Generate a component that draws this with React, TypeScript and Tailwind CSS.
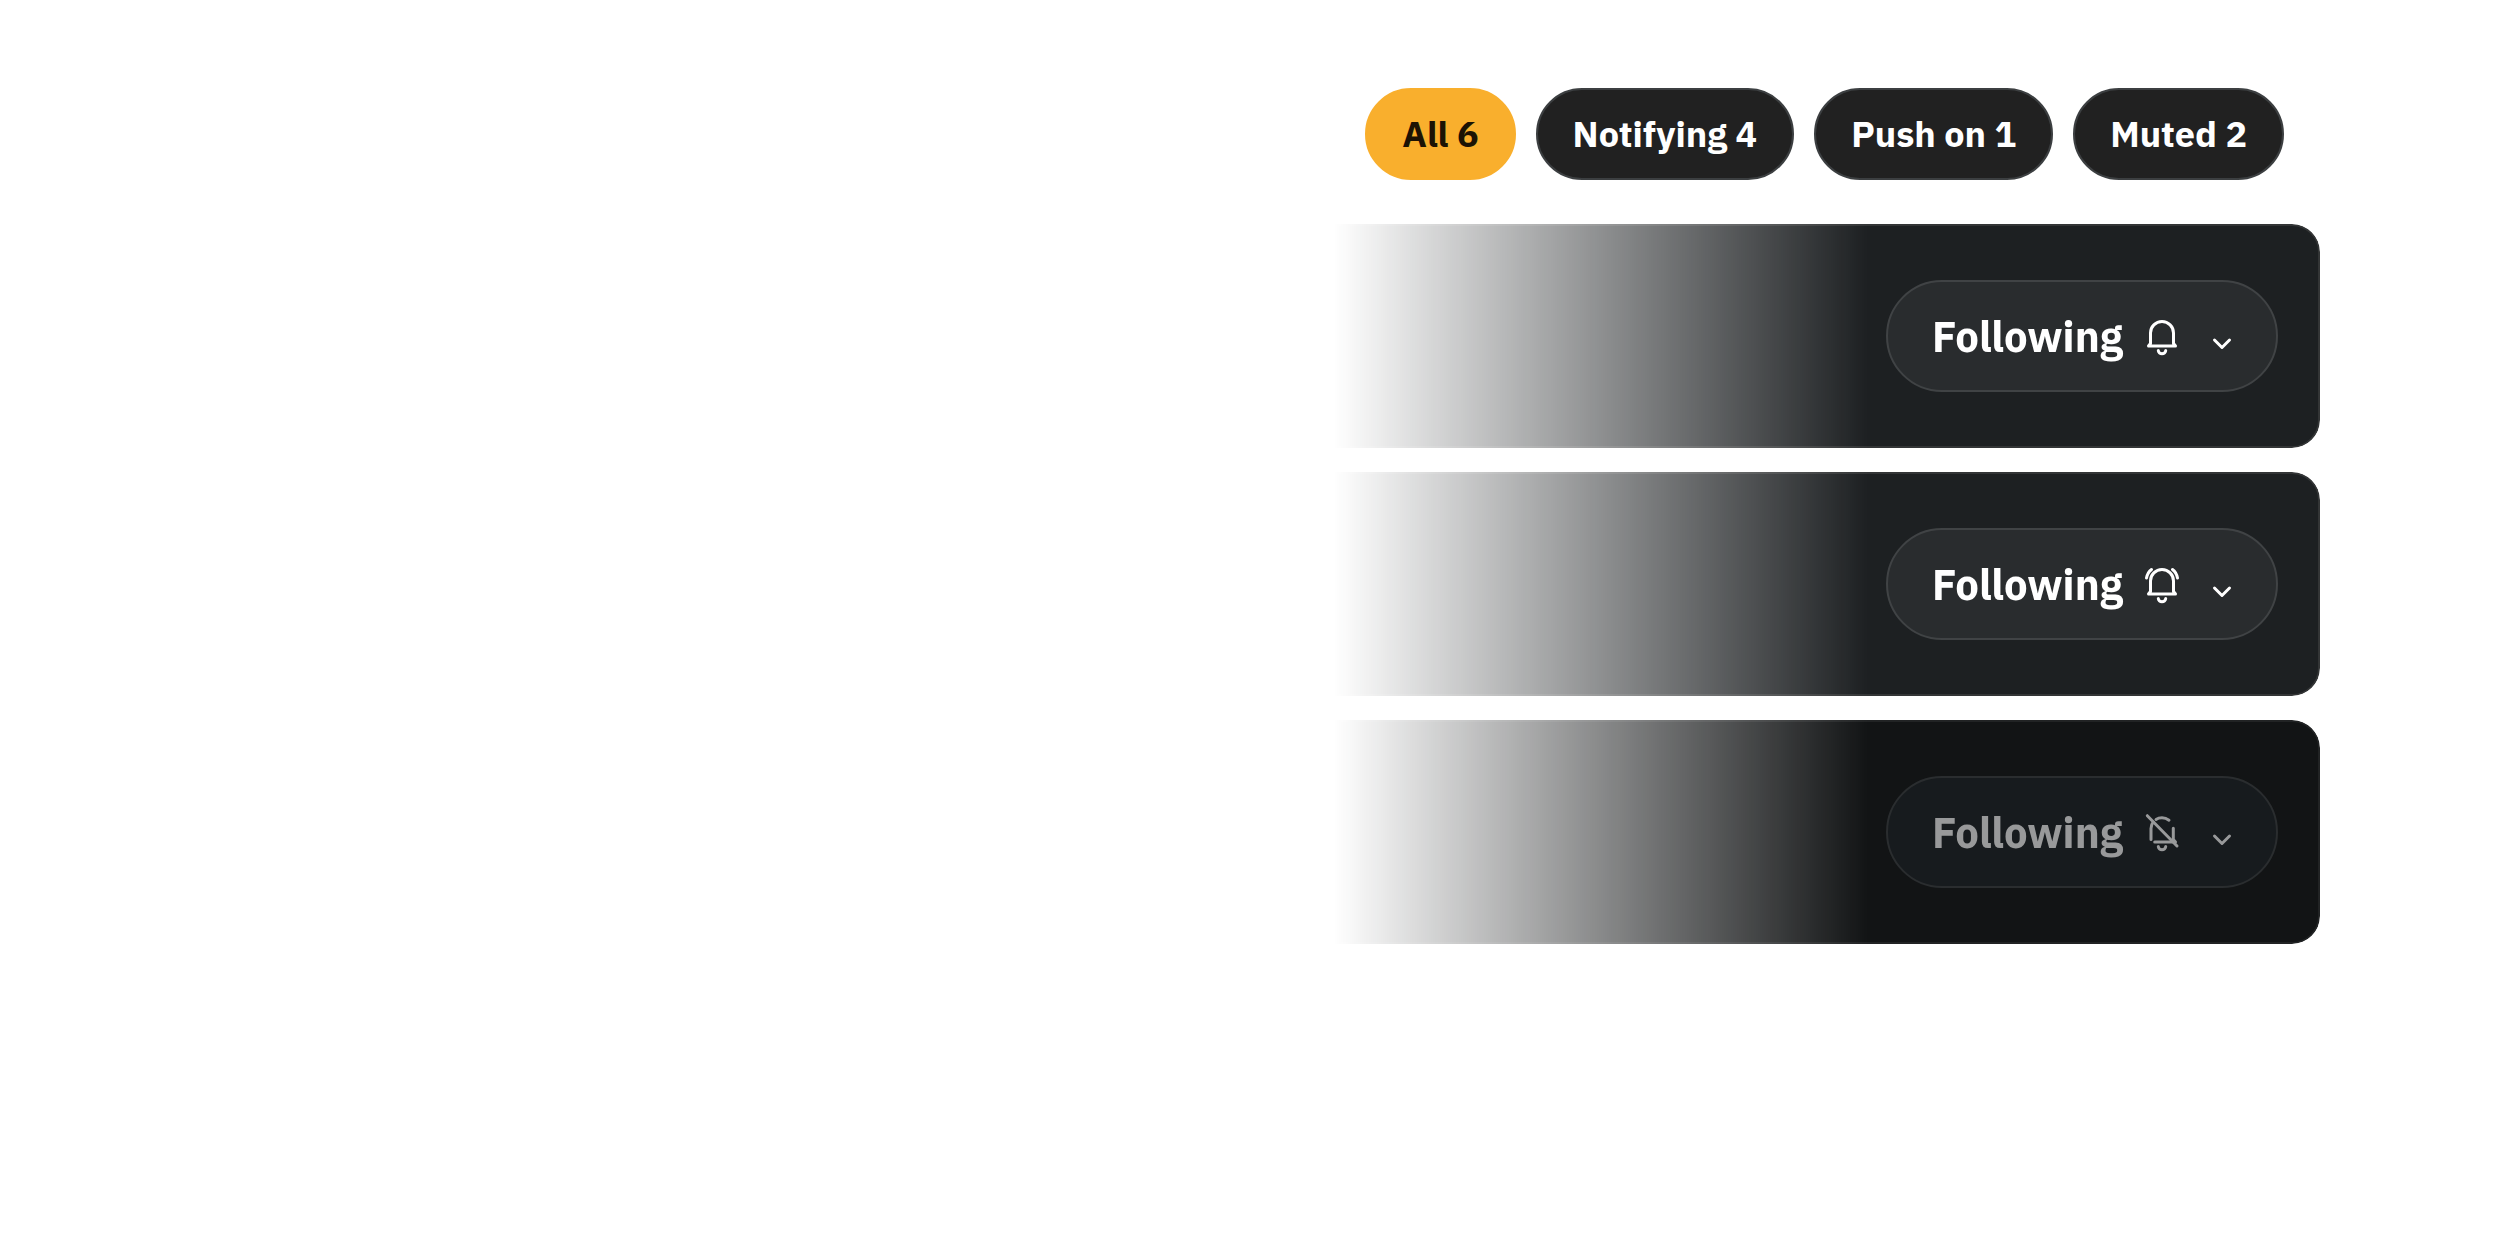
import { useState } from 'react';

type BellKind = 'on' | 'ringing' | 'off';

const filters = [
  { label: 'All', count: 6 },
  { label: 'Notifying', count: 4 },
  { label: 'Push on', count: 1 },
  { label: 'Muted', count: 2 },
];

const channels: { id: number; bell: BellKind }[] = [
  { id: 1, bell: 'on' },
  { id: 2, bell: 'ringing' },
  { id: 3, bell: 'off' },
];

function BellIcon({ kind }: { kind: BellKind }) {
  return (
    <svg
      viewBox="0 0 36 40"
      className="w-9 h-10"
      fill="none"
      stroke="currentColor"
      strokeWidth="3"
      strokeLinecap="round"
      strokeLinejoin="round"
      aria-hidden="true"
    >
      {kind === 'off' ? (
        <>
          <path d="M7 26.5V15.5Q7 11.5 9.3 9" />
          <path d="M12 6.4Q14.5 4.8 18 4.8Q21.8 4.8 25 7.2" />
          <path d="M29.3 15.3V26.5L31.5 29H10.7" />
          <path d="M3.3 2.7L33 33" />
        </>
      ) : (
        <>
          <path d="M4.5 29H31.5L29.5 26.500V16A11.5 11.5 0 0 0 6.5 16V26.500Z" />
          {kind === 'ringing' && <path d="M7.5 4.5Q3.5 7.5 2.5 13M28.5 4.5Q32.5 7.5 33.5 13" />}
        </>
      )}
      <path d="M14.3 33.5A3.7 3.2 0 0 0 21.7 33.5" />
    </svg>
  );
}

function ChevronIcon() {
  return (
    <svg
      viewBox="0 0 20 14"
      className="w-5 h-3.5"
      fill="none"
      stroke="currentColor"
      strokeWidth="3"
      strokeLinecap="round"
      strokeLinejoin="round"
      aria-hidden="true"
    >
      <path d="M2.5 3L10 10.5L17.5 3" />
    </svg>
  );
}

export default function App() {
  const [active, setActive] = useState('All');

  return (
    <main className="min-h-screen bg-white pt-22 pr-50 font-['IBM_Plex_Sans','Noto_Sans',sans-serif]">
      <div className="ml-auto w-full max-w-[1160px]">
        {/* Filter pills */}
        <div className="flex justify-end gap-5 pr-9">
          {filters.map((f) => (
            <button
              key={f.label}
              onClick={() => setActive(f.label)}
              className={`h-23 px-[35px] rounded-full border-2 text-4xl leading-none font-bold whitespace-nowrap cursor-pointer ${
                active === f.label
                  ? 'bg-[#f9af2d] border-[#f9af2d] text-[#1c1304]'
                  : 'bg-[#212121] border-[#3c3f41] text-white'
              }`}
            >
              {f.label} {f.count}
            </button>
          ))}
        </div>

        {/* Channel rows, faded out towards the left */}
        <ul className="mt-11 space-y-6">
          {channels.map((c) => {
            const muted = c.bell === 'off';
            return (
              <li
                key={c.id}
                className={`flex justify-end items-center h-56 pr-10 rounded-[28px] border-2 mask-[linear-gradient(to_left,black_39%,transparent_85%)] ${
                  muted ? 'bg-[#121415] border-[#212324]' : 'bg-[#1d2022] border-[#333536]'
                }`}
              >
                <button
                  className={`flex items-center h-28 px-11 rounded-full border-2 cursor-pointer ${
                    muted
                      ? 'bg-[#171b1e] border-[#2a2d2f] text-[#98999a]'
                      : 'bg-[#292c2e] border-[#404345] text-white'
                  }`}
                >
                  <span className="flex items-center gap-5 pt-0.5">
                    <span className="w-48 text-left text-[42px] leading-none font-bold">Following</span>
                    <BellIcon kind={c.bell} />
                  </span>
                  <span className="ml-8 pt-4">
                    <ChevronIcon />
                  </span>
                </button>
              </li>
            );
          })}
        </ul>
      </div>
    </main>
  );
}
